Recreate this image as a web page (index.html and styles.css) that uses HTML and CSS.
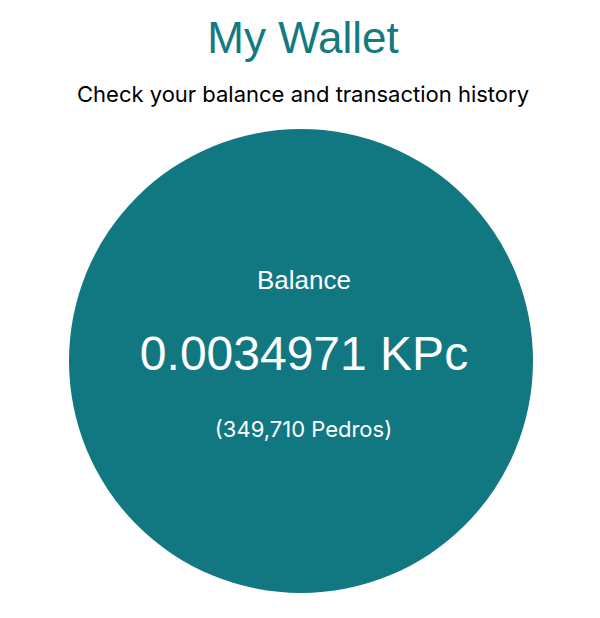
FILE: index.html
```html
<!DOCTYPE html>
<html>
<head>
<meta charset="utf-8">
<link rel="stylesheet" href="styles.css">
</head>
<body>
<main class="wallet">
  <h1 class="title">My Wallet</h1>
  <p class="subtitle">Check your balance and transaction history</p>
  <section class="balance-circle">
    <div class="label">Balance</div>
    <div class="amount">0.0034971 KPc</div>
    <div class="pedros">(349,710 Pedros)</div>
  </section>
</main>
</body>
</html>
```
FILE: styles.css
```css
html, body {
  margin: 0;
  padding: 0;
  background: #ffffff;
}
.wallet {
  display: flex;
  flex-direction: column;
  align-items: center;
  padding-left: 2px;
}
.title {
  margin: 12px 0 0 4px;
  font-family: "Liberation Sans", Arial, sans-serif;
  font-weight: normal;
  font-size: 44px;
  line-height: 52px;
  color: #117a82;
}
.subtitle {
  margin: 17px 0 0 4px;
  font-family: Inter, "Noto Sans", sans-serif;
  font-size: 22px;
  line-height: 26px;
  color: #000;
}
.balance-circle {
  margin-top: 22px;
  width: 464px;
  height: 464px;
  border-radius: 50%;
  background: #117882;
  color: #fff;
  display: flex;
  flex-direction: column;
  align-items: center;
  box-sizing: border-box;
  padding-top: 136px;
}
.label {
  margin-left: 6px;
  font-family: "Liberation Sans", Arial, sans-serif;
  font-size: 26px;
  line-height: 30px;
}
.amount {
  margin: 31px 0 0 6px;
  font-family: "Liberation Sans", Arial, sans-serif;
  font-size: 48px;
  line-height: 56px;
}
.pedros {
  margin: 34px 0 0 5px;
  font-family: Inter, "Noto Sans", sans-serif;
  font-size: 22px;
  line-height: 26px;
}
```
